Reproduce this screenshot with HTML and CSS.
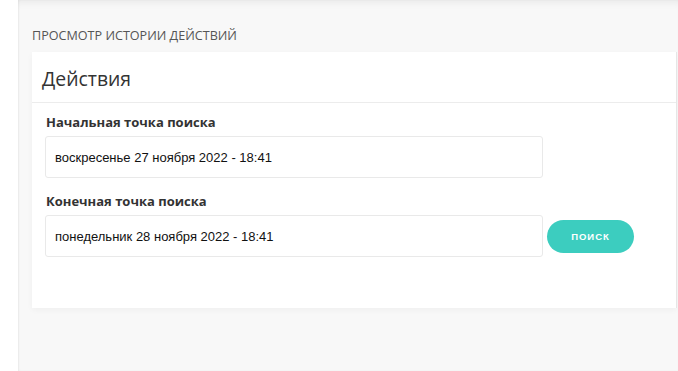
FILE: index.html
```html
<!DOCTYPE html>
<html>
<head>
<meta charset="utf-8">
<link rel="stylesheet" href="styles.css">
</head>
<body>
<div class="layout">
	<div class="sidebar"></div>
	<div class="main">
		<div class="page-title">ПРОСМОТР ИСТОРИИ ДЕЙСТВИЙ</div>
		<div class="card">
			<div class="card-head">Действия</div>
			<div class="card-body">
				<label class="field-label" for="start">Начальная точка поиска</label>
				<div class="field-row">
					<input class="field" id="start" type="text" value="воскресенье 27 ноября 2022 - 18:41">
				</div>
				<label class="field-label second" for="end">Конечная точка поиска</label>
				<div class="field-row">
					<input class="field" id="end" type="text" value="понедельник 28 ноября 2022 - 18:41">
					<button class="btn-search">ПОИСК</button>
				</div>
			</div>
		</div>
	</div>
</div>
</body>
</html>
```

FILE: styles.css
```css
html, body {
  margin: 0;
  height: 100%;
}
body {
  background-color: #ffffff;
  font-family: "Open Sans", "Liberation Sans", sans-serif;
  color: #333333;
}
.layout {
  display: flex;
  height: 100%;
}
.sidebar {
  width: 18px;
  background-color: #ffffff;
}
.main {
  flex: 1;
  background-color: #f8f8f8;
  padding: 28px 1px 0 14px;
  box-shadow: inset 1px 0 2px rgba(0,0,0,0.06), inset 0 8px 8px -6px rgba(0,0,0,0.07);
}
.page-title {
  font-size: 12.6px;
  line-height: 16px;
  color: #555555;
  margin-bottom: 8px;
}
.card {
  background-color: #ffffff;
  border-right: 1px solid #e6e6e6;
  box-shadow: 0 2px 6px rgba(0,0,0,0.04);
}
.card-head {
  height: 50px;
  line-height: 53px;
  padding-left: 10px;
  font-size: 19.4px;
  color: #333333;
  border-bottom: 1px solid #ececec;
}
.card-body {
  padding: 10px 14px 51px 13px;
}
.field-label {
  display: block;
  font-size: 13px;
  font-weight: bold;
  line-height: 18px;
  margin-bottom: 5px;
  padding-left: 1px;
}
.field-label.second {
  margin-top: 14px;
}
.field-row {
  display: flex;
  align-items: center;
  gap: 4px;
}
.field {
  width: 498px;
  height: 42px;
  box-sizing: border-box;
  border: 1px solid #e9e9e9;
  border-radius: 3px;
  padding: 0 9px;
  font-family: "Liberation Sans", Arial, sans-serif;
  font-size: 13px;
  color: #111111;
  outline: none;
}
.btn-search {
  width: 87px;
  height: 33px;
  border: none;
  border-radius: 17px;
  background-color: #3ccdbf;
  color: #ffffff;
  font-family: "Liberation Sans", Arial, sans-serif;
  font-size: 9.5px;
  font-weight: bold;
  letter-spacing: 1px;
}
```
